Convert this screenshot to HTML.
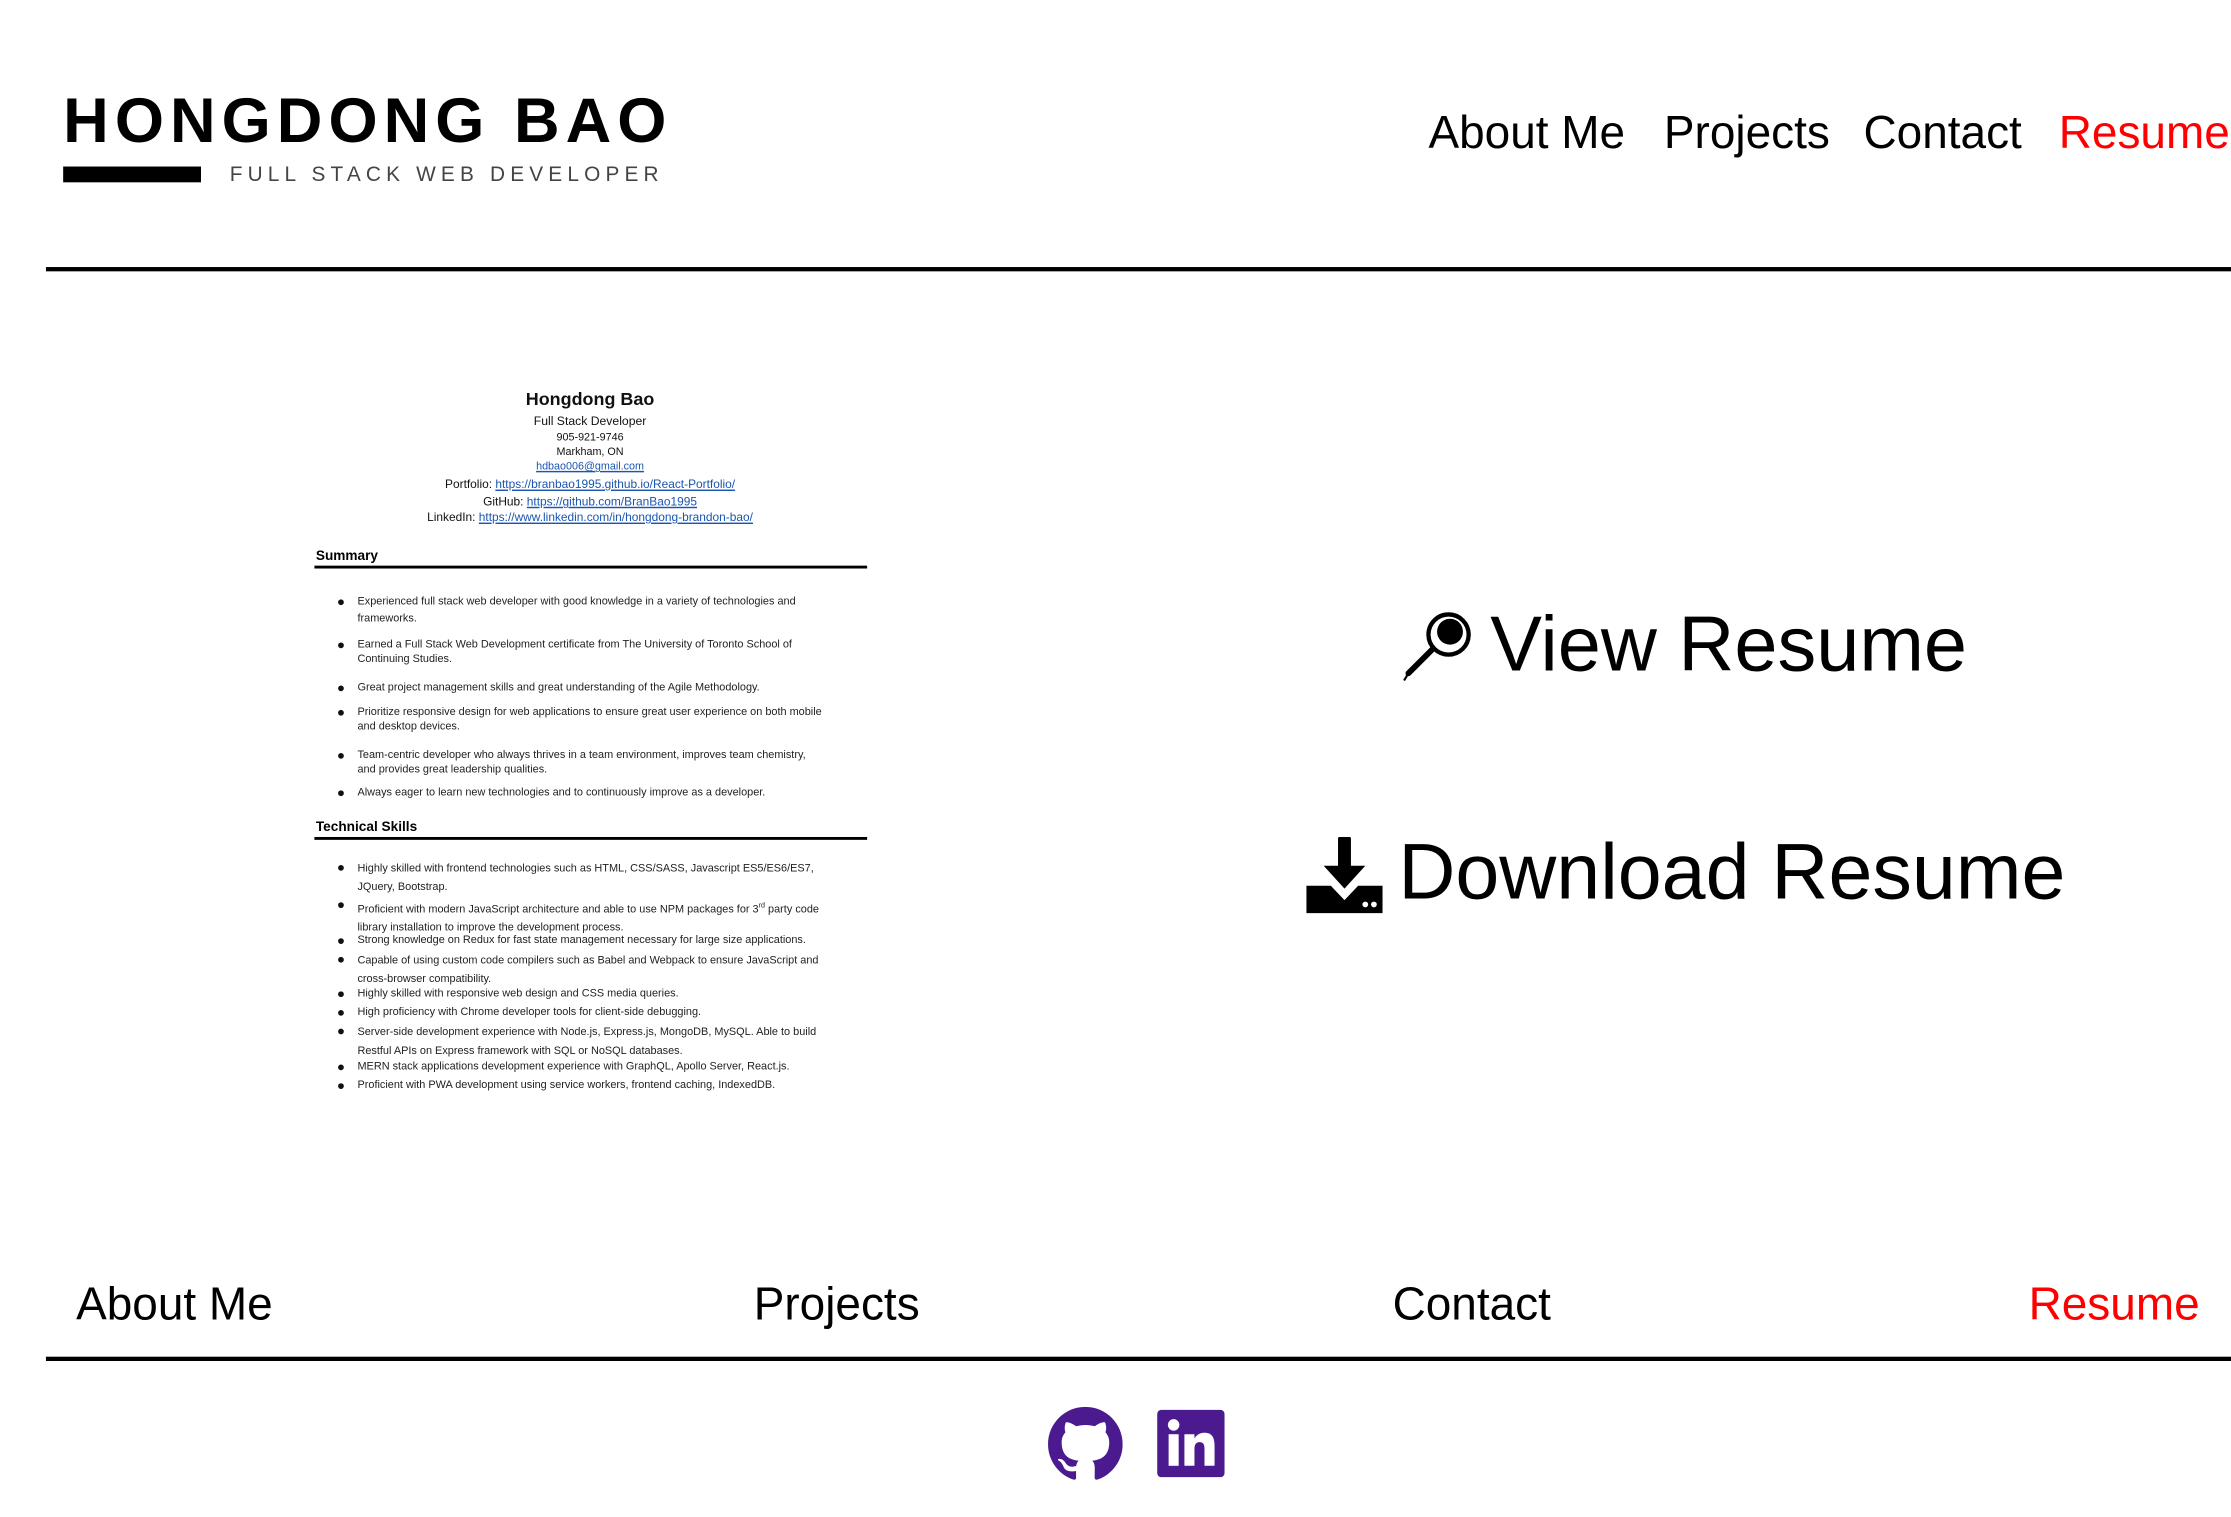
<!DOCTYPE html>
<html><head><meta charset="utf-8"><style>
html,body{margin:0;padding:0;background:#fff;overflow:hidden;width:2231px;height:1517px}
#w{position:absolute;left:0;top:0;width:1554px;height:1057px;transform:scale(1.43565);transform-origin:0 0;font-family:"Liberation Sans",sans-serif;color:#000}
.a{position:absolute;white-space:nowrap}
.nav{font-size:32px;top:74px}
.fn{font-size:32px;top:890px}
.red{color:#f00}
.hr{position:absolute;left:32px;width:1522px;height:3px;background:#000}
.d{position:absolute;white-space:nowrap;font-size:7.6px;color:#222;line-height:10px}
.c{position:absolute;left:218px;width:386px;text-align:center;white-space:nowrap;color:#111}
.b{position:absolute;left:235px;font-size:8px;top:0}
.lk{color:#1a55b0;text-decoration:underline}
</style></head><body><div id="w">
<div class="a" style="left:44px;top:60px;font-size:44px;font-weight:bold;letter-spacing:4.2px">HONGDONG BAO</div>
<div style="position:absolute;left:44px;top:116px;width:96px;height:11px;background:#000"></div>
<div class="a" style="left:160px;top:114px;font-size:14.5px;letter-spacing:3.6px;color:#444">FULL STACK WEB DEVELOPER</div>

<div class="a nav" style="left:995px">About Me</div>
<div class="a nav" style="left:1159px">Projects</div>
<div class="a nav" style="left:1298px">Contact</div>
<div class="a nav red" style="left:1434px">Resume</div>
<div class="hr" style="top:186px"></div>

<div class="c" style="top:271px;font-size:12.5px;font-weight:bold">Hongdong Bao</div>
<div class="c" style="top:288px;font-size:8.5px">Full Stack Developer</div>
<div class="c" style="top:300px;font-size:7.5px">905-921-9746</div>
<div class="c" style="top:310px;font-size:7.5px">Markham, ON</div>
<div class="c" style="top:320px;font-size:7.5px"><span class="lk">hdbao006@gmail.com</span></div>
<div class="c" style="top:332px;font-size:8.3px">Portfolio: <span class="lk">https://branbao1995.github.io/React-Portfolio/</span></div>
<div class="c" style="top:344px;font-size:8.3px">GitHub: <span class="lk">https://github.com/BranBao1995</span></div>
<div class="c" style="top:355px;font-size:8.3px">LinkedIn: <span class="lk">https://www.linkedin.com/in/hongdong-brandon-bao/</span></div>
<div class="a" style="left:220px;top:382px;font-size:9.5px;font-weight:bold">Summary</div>
<div style="position:absolute;left:219px;top:394px;width:385px;height:2px;background:#000"></div>
<div class="a" style="left:220px;top:571px;font-size:9.5px;font-weight:bold">Technical Skills</div>
<div style="position:absolute;left:219px;top:583px;width:385px;height:2px;background:#000"></div>

<div class="d" style="left:249px;top:414px">Experienced full stack web developer with good knowledge in a variety of technologies and<br><span style="line-height:14px">frameworks.</span></div>
<div class="d" style="left:249px;top:444px">Earned a Full Stack Web Development certificate from The University of Toronto School of<br>Continuing Studies.</div>
<div class="d" style="left:249px;top:474px">Great project management skills and great understanding of the Agile Methodology.</div>
<div class="d" style="left:249px;top:491px">Prioritize responsive design for web applications to ensure great user experience on both mobile<br>and desktop devices.</div>
<div class="d" style="left:249px;top:521px">Team-centric developer who always thrives in a team environment, improves team chemistry,<br>and provides great leadership qualities.</div>
<div class="d" style="left:249px;top:547px">Always eager to learn new technologies and to continuously improve as a developer.</div>
<div class="d" style="left:249px;top:599px;line-height:12.5px">Highly skilled with frontend technologies such as HTML, CSS/SASS, Javascript ES5/ES6/ES7,<br>JQuery, Bootstrap.</div>
<div class="d" style="left:249px;top:625px;line-height:12.5px">Proficient with modern JavaScript architecture and able to use NPM packages for 3<sup style="font-size:5px">rd</sup> party code<br>library installation to improve the development process.</div>
<div class="d" style="left:249px;top:650px">Strong knowledge on Redux for fast state management necessary for large size applications.</div>
<div class="d" style="left:249px;top:663px;line-height:12.5px">Capable of using custom code compilers such as Babel and Webpack to ensure JavaScript and<br>cross-browser compatibility.</div>
<div class="d" style="left:249px;top:687px">Highly skilled with responsive web design and CSS media queries.</div>
<div class="d" style="left:249px;top:700px">High proficiency with Chrome developer tools for client-side debugging.</div>
<div class="d" style="left:249px;top:713px;line-height:12.5px">Server-side development experience with Node.js, Express.js, MongoDB, MySQL. Able to build<br>Restful APIs on Express framework with SQL or NoSQL databases.</div>
<div class="d" style="left:249px;top:738px">MERN stack applications development experience with GraphQL, Apollo Server, React.js.</div>
<div class="d" style="left:249px;top:751px">Proficient with PWA development using service workers, frontend caching, IndexedDB.</div>
<svg style="position:absolute;left:0;top:0" width="620" height="780">
<g fill="#111">
<circle cx="237.5" cy="419.5" r="2"/><circle cx="237.5" cy="449.5" r="2"/><circle cx="237.5" cy="479.5" r="2"/><circle cx="237.5" cy="496.5" r="2"/><circle cx="237.5" cy="526.5" r="2"/><circle cx="237.5" cy="552.5" r="2"/>
<circle cx="237.5" cy="604.5" r="2"/><circle cx="237.5" cy="630.5" r="2"/><circle cx="237.5" cy="655.5" r="2"/><circle cx="237.5" cy="668.5" r="2"/><circle cx="237.5" cy="692.5" r="2"/><circle cx="237.5" cy="705.5" r="2"/><circle cx="237.5" cy="718.5" r="2"/><circle cx="237.5" cy="743.5" r="2"/><circle cx="237.5" cy="756.5" r="2"/>
</g></svg>

<svg style="position:absolute;left:976px;top:425px" width="52" height="52" viewBox="0 0 52 52">
<circle cx="33" cy="17" r="14" fill="none" stroke="#000" stroke-width="3"/>
<circle cx="34" cy="15" r="9" fill="#000"/>
<path d="M22 27 L5 44" stroke="#000" stroke-width="4" stroke-linecap="round"/>
<path d="M5 44 L2 49" stroke="#000" stroke-width="1.5"/>
</svg>
<div class="a" style="left:1038px;top:418px;font-size:54px">View Resume</div>

<svg style="position:absolute;left:909px;top:582px" width="56" height="56" viewBox="0 0 56 56">
<rect x="23" y="1" width="9" height="22" fill="#000" rx="1"/>
<path d="M13 21 L42 21 L27.5 37 Z" fill="#000"/>
<path d="M1 35 L18 35 L27.5 45 L37 35 L54 35 L54 54 L1 54 Z" fill="#000"/>
<circle cx="42" cy="48" r="2" fill="#fff"/><circle cx="48" cy="48" r="2" fill="#fff"/>
</svg>
<div class="a" style="left:974px;top:575px;font-size:55px">Download Resume</div>

<div class="a fn" style="left:53px">About Me</div>
<div class="a fn" style="left:525px">Projects</div>
<div class="a fn" style="left:970px">Contact</div>
<div class="a fn red" style="left:1413px">Resume</div>
<div class="hr" style="top:945px"></div>

<svg style="position:absolute;left:730px;top:980px" width="52" height="52" viewBox="0 0 16 16">
<path fill="#4b1a8e" d="M8 0C3.58 0 0 3.58 0 8c0 3.54 2.29 6.53 5.47 7.59.4.07.55-.17.55-.38 0-.19-.01-.82-.01-1.49-2.01.37-2.53-.49-2.69-.94-.09-.23-.48-.94-.82-1.13-.28-.15-.68-.52-.01-.53.63-.01 1.08.58 1.23.82.72 1.21 1.87.87 2.33.66.07-.52.28-.87.51-1.07-1.78-.2-3.64-.89-3.64-3.95 0-.87.31-1.59.82-2.15-.08-.2-.36-1.02.08-2.12 0 0 .67-.21 2.2.82.64-.18 1.32-.27 2-.27.68 0 1.36.09 2 .27 1.53-1.04 2.2-.82 2.2-.82.44 1.1.16 1.92.08 2.12.51.56.82 1.27.82 2.15 0 3.07-1.87 3.75-3.65 3.95.29.25.54.73.54 1.48 0 1.07-.01 1.93-.01 2.2 0 .21.15.46.55.38A8.013 8.013 0 0016 8c0-4.42-3.58-8-8-8z"/>
</svg>
<svg style="position:absolute;left:806px;top:982px" width="47" height="47" viewBox="0 0 47 47">
<rect width="47" height="47" rx="3" fill="#4b1a8e"/>
<rect x="8" y="17" width="7" height="22" fill="#fff"/>
<circle cx="11.5" cy="10.5" r="4" fill="#fff"/>
<path d="M19 17 H26 V20 C28 16.5 31 16 33 16 C38 16 40 19 40 25 V39 H33 V27 C33 24 32 22.5 29.5 22.5 C27 22.5 26 24.5 26 27 V39 H19 Z" fill="#fff"/>
</svg>
</div></body></html>
